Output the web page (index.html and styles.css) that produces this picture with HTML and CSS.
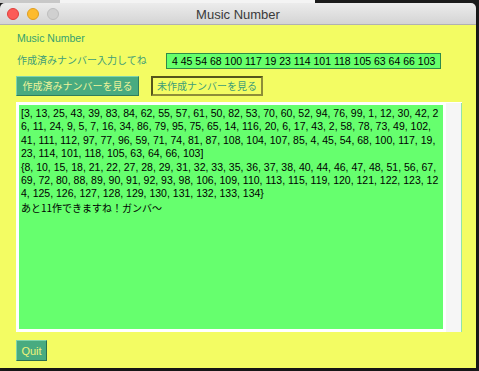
FILE: index.html
```html
<!DOCTYPE html>
<html>
<head>
<meta charset="utf-8">
<link rel="stylesheet" href="styles.css">
</head>
<body>
<div class="behind"><div class="behind-gray"></div><div class="behind-white"></div><div class="behind-dark"></div></div>
<div class="window">
  <div class="titlebar">
    <div class="lights">
      <span class="light red"></span>
      <span class="light yellow"></span>
      <span class="light gray"></span>
    </div>
    <div class="title">Music Number</div>
  </div>
  <div class="content">
    <div class="heading">Music Number</div>
    <div class="input-row">
      <div class="input-label">作成済みナンバー入力してね</div>
      <div class="entry">4 45 54 68 100 117 19 23 114 101 118 105 63 64 66 103</div>
    </div>
    <div class="buttons">
      <div class="btn btn-active">作成済みナンバーを見る</div>
      <div class="btn btn-plain">未作成ナンバーを見る</div>
    </div>
    <div class="textframe">
      <div class="textarea">
        <div class="line">[3, 13, 25, 43, 39, 83, 84, 62, 55, 57, 61, 50, 82, 53, 70, 60, 52, 94, 76, 99, 1, 12, 30, 42, 2</div>
        <div class="line">6, 11, 24, 9, 5, 7, 16, 34, 86, 79, 95, 75, 65, 14, 116, 20, 6, 17, 43, 2, 58, 78, 73, 49, 102,</div>
        <div class="line">41, 111, 112, 97, 77, 96, 59, 71, 74, 81, 87, 108, 104, 107, 85, 4, 45, 54, 68, 100, 117, 19,</div>
        <div class="line">23, 114, 101, 118, 105, 63, 64, 66, 103]</div>
        <div class="line">{8, 10, 15, 18, 21, 22, 27, 28, 29, 31, 32, 33, 35, 36, 37, 38, 40, 44, 46, 47, 48, 51, 56, 67,</div>
        <div class="line">69, 72, 80, 88, 89, 90, 91, 92, 93, 98, 106, 109, 110, 113, 115, 119, 120, 121, 122, 123, 12</div>
        <div class="line">4, 125, 126, 127, 128, 129, 130, 131, 132, 133, 134}</div>
        <div class="line jp">あと11作できますね！ガンバ〜</div>
      </div>
      <div class="scrollbar"></div>
    </div>
    <div class="quit">Quit</div>
  </div>
</div>
</body>
</html>
```
FILE: styles.css
```css
html, body {
  margin: 0;
  padding: 0;
}
body {
  width: 479px;
  height: 371px;
  overflow: hidden;
  background: #1b1b1b;
  font-family: "Liberation Sans", "Noto Sans CJK JP", sans-serif;
}
.behind {
  display: flex;
  height: 3px;
}
.behind-gray { width: 60px; background: #c8c8c8; }
.behind-white { width: 255px; background: #f4f4f4; }
.behind-dark { flex: 1; background: #1b1b1b; }

.window {
  width: 476px;
  height: 365px;
  display: flex;
  flex-direction: column;
  border-radius: 5px 5px 0 0;
  overflow: hidden;
  box-shadow: 0 2px 6px rgba(0,0,0,0.35);
}
.titlebar {
  position: relative;
  height: 21px;
  flex: none;
  background: linear-gradient(#ececec, #d4d4d4);
  border-bottom: 1px solid #b1b1b1;
  display: flex;
  align-items: center;
  justify-content: center;
}
.lights {
  position: absolute;
  left: 7px;
  top: 5px;
  display: flex;
  gap: 8px;
}
.light {
  width: 12px;
  height: 12px;
  border-radius: 50%;
  box-sizing: border-box;
}
.red { background: #fc5b57; border: 1px solid #de3f3b; }
.yellow { background: #fdbb2e; border: 1px solid #de9e22; }
.gray { background: #d0d0d0; border: 1px solid #bdbdbd; }
.title {
  font-family: "Liberation Sans", sans-serif;
  font-size: 13px;
  color: #3a3a3a;
  margin-top: 1px;
}
.content {
  flex: 1;
  background: #f3fc63;
  padding: 6px 0 0 16px;
  display: flex;
  flex-direction: column;
  align-items: flex-start;
}
.heading {
  font-size: 10.5px;
  line-height: 14px;
  color: #35a06e;
  padding-left: 1px;
}
.input-row {
  display: flex;
  align-items: center;
  margin-top: 8px;
}
.input-label {
  width: 150px;
  font-size: 10px;
  color: #3f9d78;
  padding-left: 1px;
  box-sizing: border-box;
  font-family: "Noto Sans CJK JP", sans-serif;
  margin-top: -4px;
}
.entry {
  width: 275px;
  height: 16px;
  box-sizing: border-box;
  background: #66ff6b;
  border: 1px solid #2f8a4a;
  font-size: 10.5px;
  line-height: 14px;
  padding-left: 5px;
  color: #000;
  white-space: nowrap;
  overflow: hidden;
}
.buttons {
  display: flex;
  gap: 12px;
  margin-top: 7px;
}
.btn {
  height: 20px;
  box-sizing: border-box;
  font-family: "Noto Sans CJK JP", sans-serif;
  font-size: 10px;
  line-height: 16px;
  display: flex;
  align-items: center;
  justify-content: center;
}
.btn-active {
  width: 123px;
  background: #48ab80;
  color: #eef39a;
  border: 1px solid;
  border-color: #7ed4ad #2f7e5c #2f7e5c #7ed4ad;
}
.btn-plain {
  width: 112px;
  background: #f3fc63;
  color: #3f9d78;
  border: 2px solid #8e8e38;
  border-top-color: #55551c;
  border-left-color: #55551c;
}
.textframe {
  margin-top: 6px;
  display: flex;
  background: #ffffff;
  padding: 3px 0 3px 3px;
  width: 446px;
  box-sizing: border-box;
}
.textarea {
  width: 424px;
  height: 224px;
  background: #66ff6e;
  padding: 2px 0 0 2px;
  box-sizing: border-box;
  overflow: hidden;
}
.line {
  font-size: 10.5px;
  line-height: 13.4px;
  color: #000;
  white-space: nowrap;
  height: 13.4px;
}
.jp {
  font-family: "Noto Sans CJK JP", sans-serif;
  font-size: 10px;
}
.scrollbar {
  width: 15px;
  margin-left: 3px;
  margin-top: -2px;
  margin-bottom: -3px;
  background: #f6f6f6;
  border-right: 1px solid #8fe4a8;
}
.quit {
  margin-top: 8px;
  width: 31px;
  height: 21px;
  box-sizing: border-box;
  background: #48ab80;
  color: #eef37a;
  font-size: 11px;
  display: flex;
  align-items: center;
  justify-content: center;
  border: 1px solid;
  border-color: #7ed4ad #2a6e50 #2a6e50 #7ed4ad;
}
```
